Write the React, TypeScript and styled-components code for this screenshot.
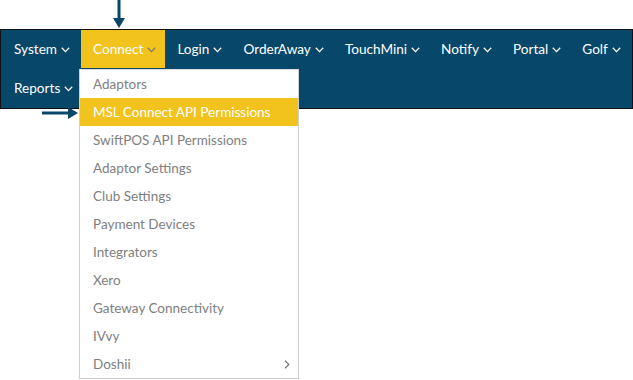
import React from "react";
import styled, { createGlobalStyle } from "styled-components";

const navy = "#07476a";
const yellow = "#f2c21d";

const GlobalStyle = createGlobalStyle`
  html, body { margin: 0; padding: 0; background: #fff; }
  body { font-family: Lato, "Noto Sans", sans-serif; }
`;

const Page = styled.div`
  position: relative;
  width: 633px;
  height: 380px;
  padding-top: 29px;
  box-sizing: border-box;
`;

const Nav = styled.nav`
  width: 633px;
  box-sizing: border-box;
  background: ${navy};
  border: 1px solid #111;
  display: flex;
  flex-direction: column;
  padding: 0 0 1px 0;
`;

const NavRow = styled.div<{ $tall?: boolean }>`
  display: flex;
  height: ${(p) => (p.$tall ? 39 : 38)}px;
`;

const NavItem = styled.div<{ $active?: boolean; $first?: boolean }>`
  position: relative;
  display: flex;
  align-items: center;
  gap: 4px;
  padding: 0 ${(p) => (p.$first ? 11 : 9)}px 0 ${(p) => (p.$first ? 13 : 12)}px;
  background: ${(p) => (p.$active ? yellow : "transparent")};
  color: #fff;
  font-size: 13.6px;
  white-space: nowrap;
  cursor: pointer;
`;

const Chevron = styled.svg<{ $muted?: boolean }>`
  width: 9px;
  height: 6px;
  margin-top: 2px;
  stroke: ${(p) => (p.$muted ? "#7c7a63" : "#fff")};
  stroke-width: 1.3;
  fill: none;
`;

const Menu = styled.ul`
  position: absolute;
  top: 39px;
  left: -2px;
  width: 220px;
  margin: 0;
  padding: 0;
  list-style: none;
  background: #fff;
  border: 1px solid #cfcfcf;
  border-top: 1px solid #dcdcdc;
  box-sizing: border-box;
  z-index: 5;
`;

const MenuItem = styled.li<{ $active?: boolean }>`
  display: flex;
  align-items: center;
  justify-content: space-between;
  height: 28px;
  padding: 0 8px 0 13px;
  font-size: 13.5px;
  color: ${(p) => (p.$active ? "#fff" : "#808080")};
  background: ${(p) => (p.$active ? yellow : "transparent")};
`;

const SubArrow = styled.svg`
  width: 6px;
  height: 9px;
  stroke: #777;
  stroke-width: 1.2;
  fill: none;
`;

const Pointer = styled.svg`
  position: absolute;
  overflow: visible;
`;

const down = (muted?: boolean) => (
  <Chevron $muted={muted} viewBox="0 0 9 6">
    <polyline points="0.8,0.8 4.5,4.6 8.2,0.8" />
  </Chevron>
);

const menuItems = [
  "Adaptors",
  "MSL Connect API Permissions",
  "SwiftPOS API Permissions",
  "Adaptor Settings",
  "Club Settings",
  "Payment Devices",
  "Integrators",
  "Xero",
  "Gateway Connectivity",
  "IVvy",
  "Doshii",
];

const topItems = ["Login", "OrderAway", "TouchMini", "Notify", "Portal", "Golf"];

export default function App() {
  return (
    <Page>
      <GlobalStyle />
      <Pointer style={{ left: 113, top: 0 }} width="12" height="29" viewBox="0 0 12 29">
        <line x1="6" y1="0" x2="6" y2="20" stroke={navy} strokeWidth="3" />
        <polygon points="0,18 12,18 6,28" fill={navy} />
      </Pointer>
      <Pointer style={{ left: 42, top: 107 }} width="36" height="12" viewBox="0 0 36 12">
        <line x1="0" y1="6" x2="28" y2="6" stroke={navy} strokeWidth="3" />
        <polygon points="26,0 26,12 36,6" fill={navy} />
      </Pointer>
      <Nav>
        <NavRow>
          <NavItem $first>System {down()}</NavItem>
          <NavItem $active>
            Connect {down(true)}
            <Menu>
              {menuItems.map((m) => (
                <MenuItem key={m} $active={m === "MSL Connect API Permissions"}>
                  {m}
                  {m === "Doshii" && (
                    <SubArrow viewBox="0 0 6 9">
                      <polyline points="1,0.8 4.8,4.5 1,8.2" />
                    </SubArrow>
                  )}
                </MenuItem>
              ))}
            </Menu>
          </NavItem>
          {topItems.map((t) => (
            <NavItem key={t}>
              {t} {down()}
            </NavItem>
          ))}
        </NavRow>
        <NavRow $tall>
          <NavItem $first>Reports {down()}</NavItem>
        </NavRow>
      </Nav>
    </Page>
  );
}
